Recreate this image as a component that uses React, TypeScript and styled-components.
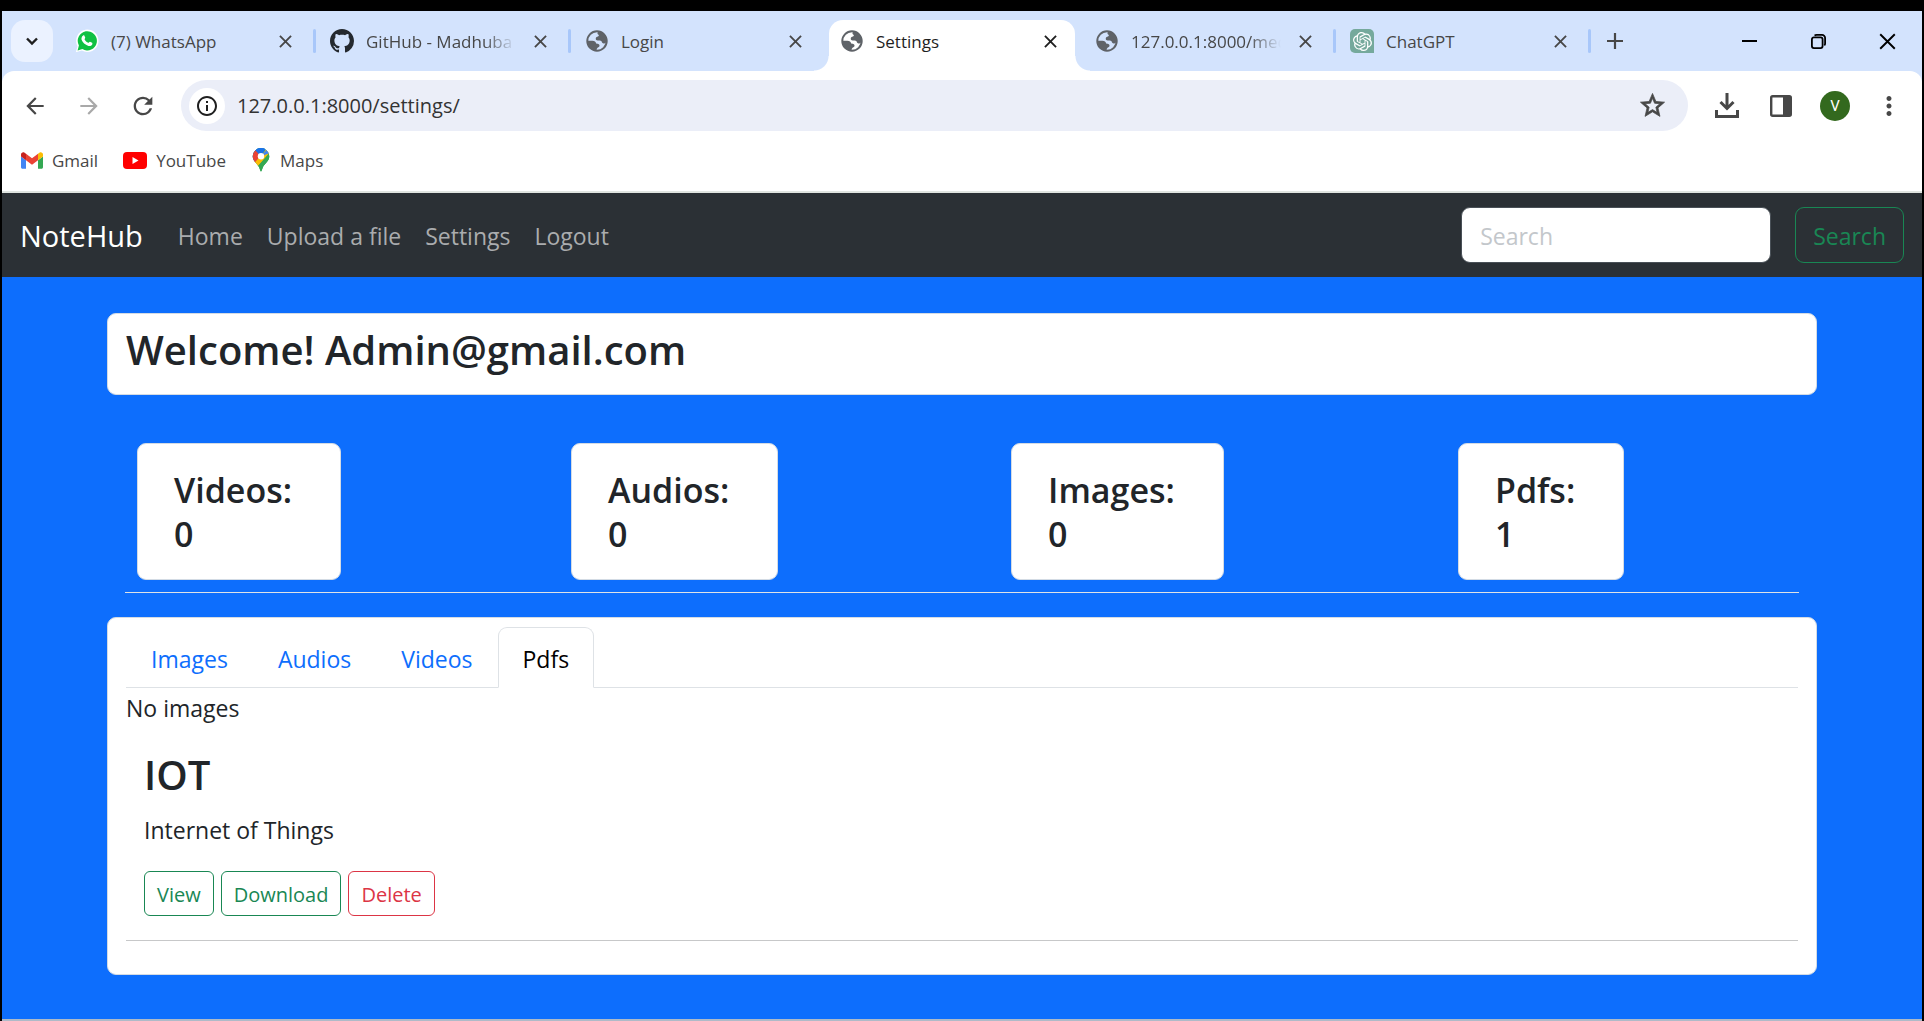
import React from "react";
import styled, { createGlobalStyle, css } from "styled-components";
import { BsGithub } from "react-icons/bs";
import { SiOpenai } from "react-icons/si";
import {
  MdArrowBack,
  MdArrowForward,
  MdRefresh,
  MdInfoOutline,
  MdStarOutline,
  MdMoreVert,
} from "react-icons/md";

const ink = "#212529";
const chromeInk = "#474747";

const GlobalStyle = createGlobalStyle`
  *, *::before, *::after { box-sizing: border-box; }
  html, body { margin: 0; padding: 0; background: #000; }
  body, button, input { font-family: "Open Sans", "Noto Sans", sans-serif; }
  h2, h3, p, ul { margin: 0; padding: 0; font-weight: inherit; }
  button { cursor: pointer; }
  a { text-decoration: none; }
`;

const Screen = styled.div`
  display: flex;
  flex-direction: column;
  min-height: 100vh;
  padding: 11px 2px 0;
  background: #000;
`;

/* Browser frame */

const TabStrip = styled.header`
  display: flex;
  align-items: stretch;
  height: 60px;
  padding-left: 9px;
  background: #d3e3fd;
`;

const IconButton = styled.button<{ $w?: number; $h?: number; $color?: string }>`
  display: flex;
  flex: none;
  align-items: center;
  justify-content: center;
  width: ${(p) => p.$w ?? 24}px;
  height: ${(p) => p.$h ?? 24}px;
  padding: 0;
  border: 0;
  background: none;
  color: ${(p) => p.$color ?? chromeInk};
`;

const TabSearch = styled(IconButton)`
  align-self: center;
  margin-right: 5px;
  border-radius: 14px;
  background: #ebf2ff;
`;

const TabList = styled.div`
  display: flex;
  flex: 0 1 1530px;
  min-width: 0;
  isolation: isolate;
`;

const BrowserTab = styled.div<{ $active?: boolean; $divider?: boolean }>`
  position: relative;
  display: flex;
  flex: 1 1 0;
  align-items: center;
  min-width: 0;
  padding-right: 16px;
  color: ${(p) => (p.$active ? "#1f1f1f" : chromeInk)};

  &::before {
    content: "";
    flex: none;
    width: 3px;
    height: 24px;
    margin-right: 14px;
    border-radius: 2px;
    background: ${(p) => (p.$divider ? "#a8c7fa" : "transparent")};
  }
`;

const ActiveShape = styled.span`
  position: absolute;
  z-index: -1;
  top: 9px;
  right: 3px;
  bottom: 0;
  left: 6px;
  border-radius: 14px 14px 0 0;
  background: #fff;

  &::before,
  &::after {
    content: "";
    position: absolute;
    bottom: 0;
    width: 15px;
    height: 15px;
  }
  &::before {
    right: 100%;
    background: radial-gradient(circle at 0 0, transparent 14px, #fff 15px);
  }
  &::after {
    left: 100%;
    background: radial-gradient(circle at 100% 0, transparent 14px, #fff 15px);
  }
`;

const Favicon = styled.span`
  display: flex;
  flex: none;
  align-items: center;
  justify-content: center;
  width: 24px;
  height: 24px;
  margin-right: 12px;
`;

const TabTitle = styled.span<{ $fade?: boolean }>`
  flex: 1;
  min-width: 0;
  margin-right: 12px;
  padding-top: 2px;
  overflow: hidden;
  font-size: 17px;
  line-height: 24px;
  white-space: nowrap;
  ${(p) =>
    p.$fade &&
    css`
      mask-image: linear-gradient(to right, #000 78%, transparent);
    `}
`;

const GptBadge = styled.span`
  display: flex;
  align-items: center;
  justify-content: center;
  width: 24px;
  height: 24px;
  border-radius: 5px 5px 0 5px;
  background: #75a99c;
  color: #fff;
`;

const NewTabArea = styled.div`
  display: flex;
  align-items: center;

  &::before {
    content: "";
    width: 3px;
    height: 24px;
    margin-right: 12px;
    border-radius: 2px;
    background: #a8c7fa;
  }
`;

const WindowControls = styled.div`
  display: flex;
  margin-left: auto;
`;

const Toolbar = styled.div`
  background: #d3e3fd;
`;

const ToolbarBody = styled.div`
  height: 122px;
  border-bottom: 2px solid #dfe4e0;
  border-radius: 12px 12px 0 0;
  background: #fff;
`;

const AddressRow = styled.div`
  display: flex;
  align-items: center;
  gap: 10px;
  padding: 9px 11px 0;
`;

const AddressBar = styled.label`
  display: flex;
  flex: 1;
  align-items: center;
  height: 51px;
  margin: 0 7px 0 6px;
  padding: 0 18px 0 8px;
  border-radius: 26px;
  background: #ebeef8;
`;

const SiteInfo = styled(IconButton)`
  border-radius: 18px;
  background: #fff;
`;

const AddressInput = styled.input`
  flex: 1;
  min-width: 0;
  margin-left: 12px;
  padding: 0;
  border: 0;
  outline: 0;
  background: none;
  color: #333;
  font-size: 20px;
  line-height: 28px;
`;

const Avatar = styled.span`
  display: flex;
  align-items: center;
  justify-content: center;
  width: 30px;
  height: 30px;
  border-radius: 50%;
  background: #33691e;
  color: #fff;
  font-family: Roboto, sans-serif;
  font-size: 15px;
`;

const Bookmarks = styled.nav`
  display: flex;
  gap: 25px;
  padding: 14px 19px 0;
`;

const Bookmark = styled.a`
  display: flex;
  align-items: center;
  gap: 9px;
  height: 30px;
  color: ${chromeInk};
  font-size: 17px;
`;

/* NoteHub page */

const Navbar = styled.nav`
  display: flex;
  align-items: center;
  height: 84px;
  padding: 0 18px;
  background: #2b3035;
`;

const Brand = styled.a`
  margin-right: 23px;
  padding-top: 2px;
  color: #fff;
  font-size: 29px;
  line-height: 44px;
`;

const NavLink = styled.a`
  padding: 2px 12px 0;
  color: #aaacae;
  font-size: 23px;
  line-height: 36px;
`;

const SearchForm = styled.form`
  display: flex;
  gap: 24px;
  margin-left: auto;
`;

const SearchInput = styled.input`
  width: 310px;
  height: 56px;
  padding: 2px 18px 0;
  border: 1px solid #495057;
  border-radius: 9px;
  outline: 0;
  background: #fff;
  color: ${ink};
  font-size: 23px;

  &::placeholder {
    color: #c3c7cb;
    opacity: 1;
  }
`;

const OutlineButton = styled.button<{ $color: string; $large?: boolean }>`
  height: ${(p) => (p.$large ? 56 : 45)}px;
  padding: 2px ${(p) => (p.$large ? 17 : 12)}px 0;
  border: 1px solid ${(p) => p.$color};
  border-radius: ${(p) => (p.$large ? 9 : 6)}px;
  background: none;
  color: ${(p) => p.$color};
  font-size: ${(p) => (p.$large ? 23 : 20)}px;
`;

const Main = styled.main`
  flex: 1;
  padding: 36px 0 44px;
  border-bottom: 2px solid #aebac8;
  background: #0d6efd;
  color: ${ink};
`;

const Container = styled.div`
  width: 100%;
  max-width: 1710px;
  margin: 0 auto;
`;

const Card = styled.section`
  border: 1px solid #d3dbe4;
  border-radius: 9px;
  background: #fff;
`;

const WelcomeCard = styled(Card)`
  padding: 11px 18px 19px;
`;

const Title = styled.h2`
  font-size: 40px;
  font-weight: 600;
  line-height: 50px;
`;

const Stats = styled.div`
  display: grid;
  grid-template-columns: 434fr 440fr 447fr 341fr;
  justify-items: start;
  margin: 48px 18px 24px;
  padding: 0 0 12px 12px;
  border-bottom: 1px solid #dee2e6;
`;

const StatCard = styled(Card)`
  padding: 24px 48px 23px 36px;
`;

const StatText = styled.p`
  font-size: 34px;
  font-weight: 600;
  line-height: 44px;
`;

const FilesCard = styled(Card)`
  padding: 9px 18px 33px;
`;

const FileTabs = styled.div`
  display: flex;
  margin-bottom: 2px;
  border-bottom: 1px solid #dee2e6;
`;

const FileTab = styled.button<{ $active?: boolean }>`
  height: 61px;
  margin-bottom: -1px;
  padding: 2px 24px 0;
  border: 1px solid transparent;
  border-radius: 9px 9px 0 0;
  background: none;
  color: #0d6efd;
  font-size: 23px;
  ${(p) =>
    p.$active &&
    css`
      border-color: #dee2e6 #dee2e6 #fff;
      background: #fff;
      color: #000;
    `}
`;

const Text = styled.p`
  font-size: 23px;
  line-height: 36px;
`;

const FileItem = styled.article`
  display: flex;
  flex-direction: column;
  gap: 12px;
  padding: 24px 18px;
  border-bottom: 1px solid #c7c8c9;
`;

const Actions = styled.div`
  display: flex;
  gap: 7px;
  padding-top: 11px;
`;

const WhatsAppIcon = () => (
  <svg width="24" height="24" viewBox="0 0 24 24" aria-hidden="true">
    <path d="M.8 23.2l1.7-6A11.2 11.2 0 1 1 6.900 21.600z" fill="#fff" />
    <path d="M2.600 21.400l1.300-4.900A9.600 9.600 0 1 1 7.400 20.100z" fill="#10c143" />
    <path
      d="M8.100 6.400c.4-.3 1-.3 1.200.2l.9 2c.2.500-.8 1.400-.6 1.800.8 1.600 2 2.700 3.700 3.400.5.200 1.200-1.200 1.700-1l2.100 1c.5.300.3 1.300 0 1.900-.6 1.100-2.300 1.600-3.600 1.200-3.600-1.100-5.800-3.300-6.900-6.100-.5-1.500.2-3.500 1.500-4.400z"
      fill="#fff"
    />
  </svg>
);

const GlobeIcon = () => (
  <svg width="24" height="24" viewBox="0 0 24 24" fill="#5f6368" aria-hidden="true">
    <circle cx="12" cy="12" r="9.700" fill="none" stroke="#5f6368" strokeWidth="2" />
    <path d="M13.500 2.500C18 3 21.500 7 21.700 11.500c-.3 2.200-1.700 3.400-3.200 2.900-1.900-.5-1.300-2.100-2.800-2.700-1.700-.6-4.400.5-4.900-1.500-.4-1.700 1-2.200 2.200-2.600 1.100-.4 1.100-1.400.2-2-1.100-.7-.9-2.300.3-3.100z" />
    <path d="M2.300 11.800h5c2.400 0 3.500 1 3.800 2.700 2.500 0 3.700.9 3.400 2.600-.2 1.400-1.900 1.300-2.500 2.400-.4.700-.2 1.500-.8 2.200C6.300 21.500 2.300 17 2.300 11.800z" />
  </svg>
);

const CrossIcon = ({ size = 13, width = 2 }: { size?: number; width?: number }) => (
  <svg width={size} height={size} viewBox="0 0 14 14" aria-hidden="true">
    <path d="M1 1l12 12M13 1L1 13" stroke="currentColor" strokeWidth={width} />
  </svg>
);

const GmailIcon = () => (
  <svg width="22" height="17" viewBox="52 42 88 66" aria-hidden="true">
    <path fill="#4285f4" d="M58 108h14V74L52 59v43c0 3.320 2.690 6 6 6" />
    <path fill="#34a853" d="M120 108h14c3.320 0 6-2.690 6-6V59l-20 15" />
    <path fill="#fbbc04" d="M120 48v26l20-15v-8c0-7.420-8.470-11.650-14.400-7.200" />
    <path fill="#ea4335" d="M72 74V48l24 18 24-18v26L96 92" />
    <path fill="#c5221f" d="M52 51v8l20 15V48l-5.600-4.200c-5.940-4.450-14.400-.22-14.400 7.200" />
  </svg>
);

const YouTubeIcon = () => (
  <svg width="24" height="17" viewBox="0 0 24 17" aria-hidden="true">
    <rect width="24" height="17" rx="4" fill="#f00" />
    <path d="M9.500 5v7l6-3.500z" fill="#fff" />
  </svg>
);

const MapsIcon = () => (
  <svg width="20" height="24" viewBox="0 0 20 24" aria-hidden="true">
    <clipPath id="pin">
      <path d="M10 0a8.300 8.300 0 0 1 8.300 8.300c0 5-4.300 6.900-6.300 10.700-.8 1.600-1.300 4.500-2 4.500s-1.200-2.900-2-4.500C6 15.200 1.700 13.300 1.700 8.300A8.300 8.300 0 0 1 10 0z" />
    </clipPath>
    <g clipPath="url(#pin)">
      <path d="M0 0h20v24H0z" fill="#34a853" />
      <path d="M0 17L15 0H0z" fill="#1a73e8" />
      <path d="M0 2l4-1 6 7.300L3 16H0z" fill="#ea4335" />
      <path d="M3 15.500L17 -1l3 4L6.500 19z" fill="#fbbc04" />
      <path d="M4 2l4-4h9l-7 10.300z" fill="#1a73e8" />
      <path d="M10 8.300L17 0l2 5-9 3.300z" fill="#4285f4" />
      <path d="M19 4.500v20H8L6.500 18.500z" fill="#34a853" />
    </g>
    <circle cx="10" cy="8.300" r="3.200" fill="#fff" />
  </svg>
);

const browserTabs = [
  { title: "(7) WhatsApp", icon: <WhatsAppIcon /> },
  { title: "GitHub - Madhuba", icon: <BsGithub size={24} color="#24292f" />, divider: true, fade: true },
  { title: "Login", icon: <GlobeIcon />, divider: true },
  { title: "Settings", icon: <GlobeIcon />, active: true },
  { title: "127.0.0.1:8000/med", icon: <GlobeIcon />, fade: true },
  { title: "ChatGPT", icon: <GptBadge><SiOpenai size={19} /></GptBadge>, divider: true },
];

const stats = [
  ["Videos:", 0],
  ["Audios:", 0],
  ["Images:", 0],
  ["Pdfs:", 1],
];

const Browser = () => (
  <>
    <TabStrip>
      <TabSearch $w={42} $h={42} $color="#1f1f1f" aria-label="Search tabs">
        <svg width="14" height="9" viewBox="0 0 14 9" aria-hidden="true">
          <path d="M2 1.500l5 5 5-5" fill="none" stroke="currentColor" strokeWidth="2.400" />
        </svg>
      </TabSearch>
      <TabList>
        {browserTabs.map((t) => (
          <BrowserTab key={t.title} $active={t.active} $divider={t.divider}>
            {t.active && <ActiveShape />}
            <Favicon>{t.icon}</Favicon>
            <TabTitle $fade={t.fade}>{t.title}</TabTitle>
            <IconButton $color="inherit" aria-label={`Close ${t.title}`}>
              <CrossIcon />
            </IconButton>
          </BrowserTab>
        ))}
      </TabList>
      <NewTabArea>
        <IconButton aria-label="New tab">
          <svg width="16" height="16" viewBox="0 0 16 16" aria-hidden="true">
            <path d="M8 0v16M0 8h16" stroke="currentColor" strokeWidth="2.200" />
          </svg>
        </IconButton>
      </NewTabArea>
      <WindowControls>
        <IconButton $w={69} $h={60} $color="#000" aria-label="Minimize">
          <svg width="15" height="15" aria-hidden="true"><path d="M0 7h15" stroke="currentColor" strokeWidth="2" /></svg>
        </IconButton>
        <IconButton $w={69} $h={60} $color="#000" aria-label="Restore">
          <svg width="15" height="15" viewBox="0 0 15 15" fill="none" stroke="currentColor" strokeWidth="1.800" aria-hidden="true">
            <rect x=".9" y="3.400" width="10.700" height="10.700" rx="2" />
            <path d="M3.600 1.600C4.200 1 4.800.9 5.600.9H11A3.100 3.100 0 0 1 14.100 4v5.400c0 .8-.2 1.400-.8 2" />
          </svg>
        </IconButton>
        <IconButton $w={69} $h={60} $color="#000" aria-label="Close window">
          <CrossIcon size={17} width={1.600} />
        </IconButton>
      </WindowControls>
    </TabStrip>
    <Toolbar>
      <ToolbarBody>
        <AddressRow>
          <IconButton $w={44} $h={44} aria-label="Back"><MdArrowBack size={26} /></IconButton>
          <IconButton $w={44} $h={44} $color="#a9a9a9" aria-label="Forward"><MdArrowForward size={26} /></IconButton>
          <IconButton $w={44} $h={44} aria-label="Reload"><MdRefresh size={28} /></IconButton>
          <AddressBar>
            <SiteInfo $w={36} $h={36} $color="#1f1f1f" aria-label="Site information"><MdInfoOutline size={24} /></SiteInfo>
            <AddressInput aria-label="Address" defaultValue="127.0.0.1:8000/settings/" />
            <IconButton $w={36} $h={36} aria-label="Bookmark this page"><MdStarOutline size={29} stroke="currentColor" strokeWidth={0.6} /></IconButton>
          </AddressBar>
          <IconButton $w={44} $h={44} aria-label="Downloads">
            <svg width="24" height="25" viewBox="0 0 24 25" fill="none" stroke="currentColor" strokeWidth="3" aria-hidden="true">
              <path d="M12 0v15M5.500 9l6.500 6.500L18.500 9M1.500 17v6.500h21V17" />
            </svg>
          </IconButton>
          <IconButton $w={44} $h={44} aria-label="Side panel">
            <svg width="22" height="22" viewBox="0 0 22 22" aria-hidden="true">
              <rect x="1.200" y="1.200" width="19.600" height="19.600" rx="1.500" fill="none" stroke="currentColor" strokeWidth="2.400" />
              <path d="M13 1h8v20h-8z" fill="currentColor" />
            </svg>
          </IconButton>
          <IconButton $w={44} $h={44} aria-label="Profile"><Avatar>V</Avatar></IconButton>
          <IconButton $w={44} $h={44} aria-label="Menu"><MdMoreVert size={30} /></IconButton>
        </AddressRow>
        <Bookmarks aria-label="Bookmarks">
          <Bookmark href="#gmail"><GmailIcon />Gmail</Bookmark>
          <Bookmark href="#youtube"><YouTubeIcon />YouTube</Bookmark>
          <Bookmark href="#maps"><MapsIcon />Maps</Bookmark>
        </Bookmarks>
      </ToolbarBody>
    </Toolbar>
  </>
);

export default function App() {
  return (
    <Screen>
      <GlobalStyle />
      <Browser />
      <Navbar>
        <Brand href="#home">NoteHub</Brand>
        <NavLink href="#home">Home</NavLink>
        <NavLink href="#upload">Upload a file</NavLink>
        <NavLink href="#settings">Settings</NavLink>
        <NavLink href="#logout">Logout</NavLink>
        <SearchForm onSubmit={(e) => e.preventDefault()}>
          <SearchInput type="search" placeholder="Search" aria-label="Search" />
          <OutlineButton type="submit" $large $color="#198754">Search</OutlineButton>
        </SearchForm>
      </Navbar>
      <Main>
        <Container>
          <WelcomeCard>
            <Title>Welcome! Admin@gmail.com</Title>
          </WelcomeCard>
          <Stats>
            {stats.map(([label, count]) => (
              <StatCard key={label}>
                <StatText>{label}</StatText>
                <StatText>{count}</StatText>
              </StatCard>
            ))}
          </Stats>
          <FilesCard>
            <FileTabs role="tablist">
              <FileTab role="tab">Images</FileTab>
              <FileTab role="tab">Audios</FileTab>
              <FileTab role="tab">Videos</FileTab>
              <FileTab role="tab" aria-selected $active>Pdfs</FileTab>
            </FileTabs>
            <Text>No images</Text>
            <FileItem>
              <Title as="h3">IOT</Title>
              <Text>Internet of Things</Text>
              <Actions>
                <OutlineButton $color="#198754">View</OutlineButton>
                <OutlineButton $color="#198754">Download</OutlineButton>
                <OutlineButton $color="#dc3545">Delete</OutlineButton>
              </Actions>
            </FileItem>
          </FilesCard>
        </Container>
      </Main>
    </Screen>
  );
}
